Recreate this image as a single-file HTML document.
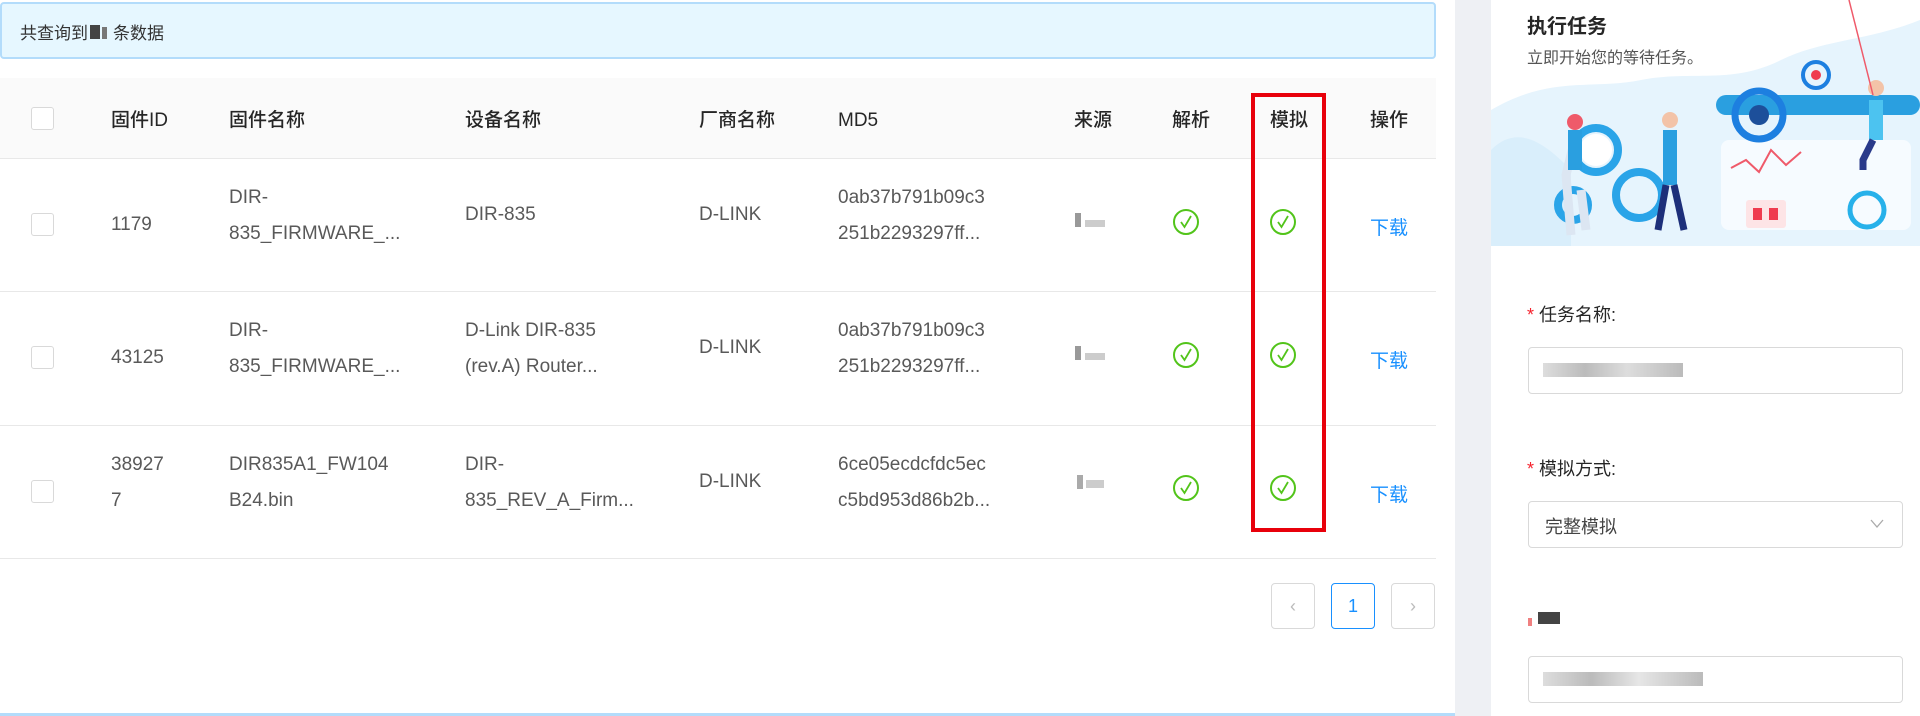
<!DOCTYPE html>
<html><head><meta charset="utf-8"><style>
*{box-sizing:border-box;margin:0;padding:0}
body{width:1920px;height:716px;overflow:hidden;background:#fff;font-family:"Liberation Sans","Noto Sans CJK SC",sans-serif;color:#595959;position:relative}
.abs{position:absolute}
.alert{left:0;top:2px;width:1436px;height:57px;background:#e6f7ff;border:2px solid #b3dcfb;border-radius:4px;font-size:17px;color:#333;padding:15px 18px}
.th{top:78px;left:0;width:1436px;height:81px;background:#fafafa;border-bottom:1px solid #e8e8e8}
.hd{font-size:19px;color:#262626;top:108px;line-height:26px;font-weight:500}
.row{left:0;width:1436px;border-bottom:1px solid #e8e8e8}
.cb{width:23px;height:23px;border:1px solid #d9d9d9;border-radius:3px;background:#fff;left:31px}
.t{font-size:19px;line-height:36px;color:#595959}
.dl{color:#1890ff;font-size:19px}
.lbl{font-size:18px;color:#262626;left:1527px}
.lbl b{color:#f5222d;font-weight:normal;margin-right:5px}
.inp{left:1528px;width:375px;height:47px;border:1px solid #d9d9d9;border-radius:4px;background:#fff}
.pg{width:44px;height:46px;border:1px solid #d9d9d9;border-radius:4px;top:583px;font-size:18px;text-align:center;line-height:44px;color:#bbb}
</style></head><body>
<div class="abs alert">共查询到<span style="display:inline-block;width:10px;height:14px;background:#444;margin:0 2px"></span><span style="display:inline-block;width:5px;height:12px;background:#777;margin-right:6px"></span>条数据</div>
<div class="abs th"></div>
<div class="abs cb" style="top:107px"></div>
<div class="abs hd" style="left:111px">固件ID</div>
<div class="abs hd" style="left:229px">固件名称</div>
<div class="abs hd" style="left:465px">设备名称</div>
<div class="abs hd" style="left:699px">厂商名称</div>
<div class="abs hd" style="left:838px;top:108px">MD5</div>
<div class="abs hd" style="left:1074px">来源</div>
<div class="abs hd" style="left:1172px">解析</div>
<div class="abs hd" style="left:1270px">模拟</div>
<div class="abs hd" style="left:1370px">操作</div>

<div class="abs row" style="top:159px;height:133px"></div>
<div class="abs row" style="top:292px;height:134px"></div>
<div class="abs row" style="top:426px;height:133px"></div>

<div class="abs cb" style="top:213px"></div>
<div class="abs t" style="left:111px;top:207px">1179</div>
<div class="abs t" style="left:229px;top:180px">DIR-<br>835_FIRMWARE_...</div>
<div class="abs t" style="left:465px;top:197px">DIR-835</div>
<div class="abs t" style="left:699px;top:197px">D-LINK</div>
<div class="abs t" style="left:838px;top:180px">0ab37b791b09c3<br>251b2293297ff...</div>
<div class="abs" style="left:1075px;top:213px;width:6px;height:14px;background:#999"></div><div class="abs" style="left:1085px;top:220px;width:20px;height:7px;background:#ccc"></div>
<div class="abs dl" style="left:1370px;top:213px">下载</div>

<div class="abs cb" style="top:346px"></div>
<div class="abs t" style="left:111px;top:340px">43125</div>
<div class="abs t" style="left:229px;top:313px">DIR-<br>835_FIRMWARE_...</div>
<div class="abs t" style="left:465px;top:313px">D-Link DIR-835<br>(rev.A) Router...</div>
<div class="abs t" style="left:699px;top:330px">D-LINK</div>
<div class="abs t" style="left:838px;top:313px">0ab37b791b09c3<br>251b2293297ff...</div>
<div class="abs" style="left:1075px;top:346px;width:6px;height:14px;background:#999"></div><div class="abs" style="left:1085px;top:353px;width:20px;height:7px;background:#ccc"></div>
<div class="abs dl" style="left:1370px;top:346px">下载</div>

<div class="abs cb" style="top:480px"></div>
<div class="abs t" style="left:111px;top:447px">38927<br>7</div>
<div class="abs t" style="left:229px;top:447px">DIR835A1_FW104<br>B24.bin</div>
<div class="abs t" style="left:465px;top:447px">DIR-<br>835_REV_A_Firm...</div>
<div class="abs t" style="left:699px;top:464px">D-LINK</div>
<div class="abs t" style="left:838px;top:447px">6ce05ecdcfdc5ec<br>c5bd953d86b2b...</div>
<div class="abs" style="left:1077px;top:475px;width:6px;height:14px;background:#aaa"></div><div class="abs" style="left:1086px;top:480px;width:18px;height:8px;background:#ccc"></div>
<div class="abs dl" style="left:1370px;top:480px">下载</div>

<svg class="abs" style="left:0;top:0" width="1440" height="560">
<defs><g id="ck"><circle cx="0" cy="0" r="12" fill="none" stroke="#52c41a" stroke-width="2"/><path d="M-5 0 L-1.5 5 L5 -6" fill="none" stroke="#52c41a" stroke-width="1.8"/></g></defs>
<use href="#ck" x="1186" y="222"/><use href="#ck" x="1283" y="222"/>
<use href="#ck" x="1186" y="355"/><use href="#ck" x="1283" y="355"/>
<use href="#ck" x="1186" y="488"/><use href="#ck" x="1283" y="488"/>
<rect x="1253" y="95" width="71" height="435" fill="none" stroke="#e8000b" stroke-width="4"/>
</svg>

<div class="abs pg" style="left:1271px">&lsaquo;</div>
<div class="abs pg" style="left:1331px;border-color:#1890ff;color:#1890ff">1</div>
<div class="abs pg" style="left:1391px">&rsaquo;</div>
<div class="abs" style="left:0;top:713px;width:1455px;height:3px;background:#b3dcfb"></div>

<div class="abs" style="left:1455px;top:0;width:36px;height:716px;background:#eef0f4"></div>
<div class="abs" style="left:1491px;top:0;width:429px;height:2px;background:#dbe6f2"></div>

<svg class="abs" style="left:1491px;top:0" width="429" height="246">
<rect x="0" y="0" width="429" height="246" fill="#e6f4fd"/>
<path d="M0 0 L429 0 L429 20 C380 40 330 40 290 60 C240 85 200 70 150 80 C100 90 60 75 0 110Z" fill="#fff"/>
<path d="M0 150 C30 120 60 150 80 170 L80 246 L0 246Z" fill="#d9eefb"/>
<rect x="225" y="95" width="204" height="20" rx="10" fill="#2a9fe0"/>
<rect x="230" y="140" width="190" height="90" rx="8" fill="#f6fbff"/>
<polyline points="240,168 255,160 268,172 280,150 295,165 310,152" fill="none" stroke="#ef5a6a" stroke-width="2"/>
<g fill="none" stroke="#2aa4e8" stroke-width="8"><circle cx="105" cy="150" r="22"/><circle cx="82" cy="205" r="15"/><circle cx="148" cy="195" r="23"/></g>
<circle cx="105" cy="150" r="16" fill="#fff"/>
<circle cx="268" cy="115" r="24" fill="none" stroke="#1d7fe0" stroke-width="7"/><circle cx="268" cy="115" r="10" fill="#1d4f9a"/>
<circle cx="325" cy="75" r="13" fill="none" stroke="#1d7fe0" stroke-width="4"/><circle cx="325" cy="75" r="5" fill="#ef3b4f"/>
<circle cx="376" cy="210" r="17" fill="none" stroke="#27b1ea" stroke-width="5"/>
<rect x="255" y="200" width="40" height="28" rx="3" fill="#fde4e6"/><rect x="262" y="208" width="9" height="12" fill="#ef3b4f"/><rect x="278" y="208" width="9" height="12" fill="#ef3b4f"/>
<path d="M85 135 l-10 40 l5 60 M95 230 l-5 -40" stroke="#dce6f2" stroke-width="9" fill="none"/><rect x="77" y="130" width="14" height="40" fill="#2a9fe0"/><circle cx="84" cy="122" r="8" fill="#ef5a6a"/>
<rect x="172" y="130" width="14" height="55" fill="#2a9fe0"/><path d="M175 185 l-8 45 M183 185 l10 45" stroke="#1d2f7a" stroke-width="7"/><circle cx="179" cy="120" r="8" fill="#f3c3a8"/>
<rect x="378" y="100" width="14" height="40" fill="#4cc3f0"/><path d="M382 140 l-10 20 l0 10" stroke="#2a3a8a" stroke-width="7" fill="none"/><circle cx="385" cy="88" r="8" fill="#f3c3a8"/>
<line x1="358" y1="0" x2="382" y2="95" stroke="#ef5a6a" stroke-width="1.5"/>
</svg>
<div class="abs" style="left:1527px;top:10px;font-size:20px;font-weight:bold;color:#262626">执行任务</div>
<div class="abs" style="left:1527px;top:44px;font-size:16px;color:#555">立即开始您的等待任务。</div>

<div class="abs lbl" style="top:301px"><b>*</b>任务名称:</div>
<div class="abs inp" style="top:347px"><div class="abs" style="left:14px;top:15px;width:140px;height:14px;background:linear-gradient(90deg,#ddd,#bbb 30%,#ddd 60%,#bbb)"></div></div>
<div class="abs lbl" style="top:455px"><b>*</b>模拟方式:</div>
<div class="abs inp" style="top:501px"><div class="abs" style="left:16px;top:11px;font-size:18px;color:#444">完整模拟</div><svg class="abs" style="left:341px;top:17px" width="14" height="10"><path d="M1 1 L7 8 L13 1" fill="none" stroke="#aaa" stroke-width="1.3"/></svg></div>
<div class="abs" style="left:1528px;top:618px;width:4px;height:8px;background:#f08080"></div><div class="abs" style="left:1538px;top:612px;width:22px;height:12px;background:#444"></div>
<div class="abs inp" style="top:656px"><div class="abs" style="left:14px;top:15px;width:160px;height:14px;background:linear-gradient(90deg,#ddd,#bbb 30%,#e6e6e6 60%,#bbb)"></div></div>
</body></html>
